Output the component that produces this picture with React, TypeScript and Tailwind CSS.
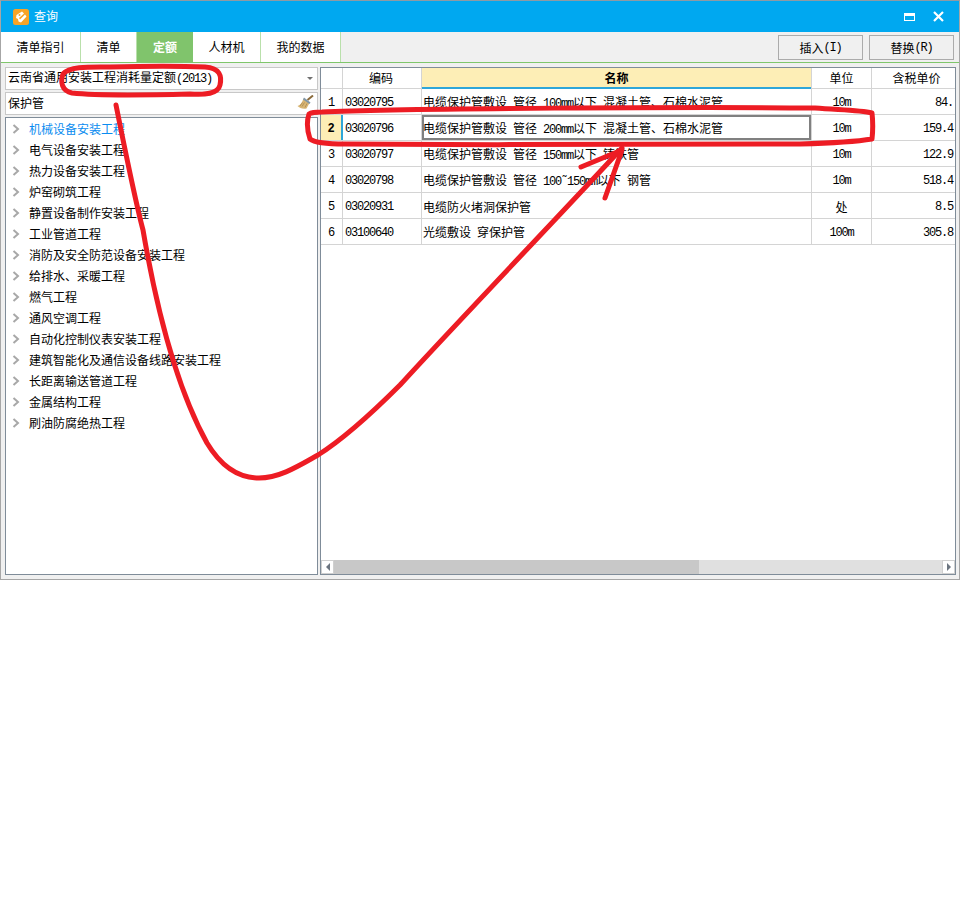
import React from 'react';

const tabs = [
  { name: '清单指引', width: 'w-[80px]' },
  { name: '清单', width: 'w-[56px]' },
  { name: '定额', width: 'w-[56px]', active: true },
  { name: '人材机', width: 'w-[68px]' },
  { name: '我的数据', width: 'w-[80px]' },
];

const treeItems = [
  '机械设备安装工程',
  '电气设备安装工程',
  '热力设备安装工程',
  '炉窑砌筑工程',
  '静置设备制作安装工程',
  '工业管道工程',
  '消防及安全防范设备安装工程',
  '给排水、采暖工程',
  '燃气工程',
  '通风空调工程',
  '自动化控制仪表安装工程',
  '建筑智能化及通信设备线路安装工程',
  '长距离输送管道工程',
  '金属结构工程',
  '刷油防腐绝热工程',
];

const rows = [
  { no: 1, code: '03020795', name: '电缆保护管敷设 管径 100mm以下 混凝土管、石棉水泥管', unit: '10m', price: '84.' },
  { no: 2, code: '03020796', name: '电缆保护管敷设 管径 200mm以下 混凝土管、石棉水泥管', unit: '10m', price: '159.4' },
  { no: 3, code: '03020797', name: '电缆保护管敷设 管径 150mm以下 铸铁管', unit: '10m', price: '122.9' },
  { no: 4, code: '03020798', name: '电缆保护管敷设 管径 100˜150mm以下 钢管', unit: '10m', price: '518.4' },
  { no: 5, code: '03020931', name: '电缆防火堵洞保护管', unit: '处', price: '8.5' },
  { no: 6, code: '03100640', name: '光缆敷设 穿保护管', unit: '100m', price: '305.8' },
];

// latin bits are narrower than the CJK ones, like the bitmap font in the shot
const latin = "font-['Liberation_Mono',monospace] text-[12px] tracking-[-1.2px] whitespace-pre";

const Mixed: React.FC<{ text: string }> = ({ text }) => (
  <>
    {text.split(/([\x20-\x7e˜]+)/).map((part, i) =>
      i % 2 === 1 ? (
        <span key={i} className={latin}>
          {part}
        </span>
      ) : (
        <span key={i}>{part}</span>
      ),
    )}
  </>
);

const Logo = () => (
  <svg width="16" height="16" viewBox="0 0 16 16">
    <rect width="16" height="16" rx="2.5" fill="#f7a428" />
    <path d="M3.5 6 L9 2.5 L11 4.5 L6 9 L7 10.5 L12 5.5 L13.5 7.5 L8 13.5 L5.5 12.5 L5 10 L3 9 Z" fill="#fff" />
    <circle cx="6.5" cy="6" r="1" fill="#f7a428" />
  </svg>
);

const Broom = () => (
  <svg width="17" height="15" viewBox="0 0 17 15">
    <path d="M10.5 5 L16 0.5" stroke="#8a6a3a" strokeWidth="2" />
    <path d="M6.5 3.5 L12.5 8 L9.5 13.5 C6 14.5 2.5 13 0.5 11 C3 10.5 5 8 6.5 3.5 Z" fill="#d8b573" />
    <path d="M5 11.5 L7.5 7.5 M8 12.5 L10 8.5 M3 11 L5.5 7.5" stroke="#a98850" strokeWidth="0.8" />
    <path d="M7 2.5 L13.5 7.5 L12.5 9 L6 4.5 Z" fill="#7f96a8" />
  </svg>
);

const Chevron = () => (
  <svg width="8" height="10" viewBox="0 0 8 10" className="shrink-0">
    <path d="M1.5 1 L6 5 L1.5 9" stroke="#a8a8a8" strokeWidth="2" fill="none" />
  </svg>
);

const Annotations = () => (
  <svg width="960" height="580" viewBox="0 0 960 580" className="absolute left-0 top-0 pointer-events-none">
    <g stroke="#ed1c24" fill="none" strokeLinecap="round" strokeLinejoin="round">
      <path
        strokeWidth="5"
        d="M63 74 C70 66 90 67 110 67 C150 66 180 66 205 67 C220 68 222 76 220 85 C218 94 205 95 190 94 C150 95 100 96 72 93 C62 91 60 82 63 74 Z"
      />
      <path
        strokeWidth="5"
        d="M322 112 C400 108 700 107 815 108 C840 110 860 110 872 113 C873 122 873 130 872 139 C860 141 835 143 800 144 C700 145 500 145 345 144 C330 144 315 143 310 139 C307 130 307 120 309 114 C312 112 316 112 322 112 Z"
      />
      <path
        strokeWidth="5"
        d="M116 105 C125 150 135 200 143 230 C155 300 175 385 207 443 C222 468 240 478 259 478 C280 478 300 465 318 455 C345 438 375 410 400 385 C450 330 560 215 622 148"
      />
      <path strokeWidth="5" d="M581 167 L622 150 L605 198" />
    </g>
  </svg>
);

export default function App() {
  return (
    <div className="relative w-[960px] h-[906px] bg-white overflow-hidden font-['Noto_Sans_CJK_SC',sans-serif] text-[12px] text-black">
      <div className="w-[960px] h-[580px] flex flex-col border border-[#a6a6a6] border-t-[#8f9aa3] bg-[#f0f0f0]">
        {/* title bar */}
        <div className="h-[31px] shrink-0 bg-[#00a8f0] flex items-center pl-[12px] pr-[15px] text-white">
          <Logo />
          <span className="ml-[5px] pb-[2px]">查询</span>
          <div className="ml-auto flex items-center gap-[18px]">
            <div className="w-[11px] h-[8px] border border-white border-t-[3px]" />
            <svg width="11" height="11" viewBox="0 0 11 11">
              <path d="M1 1 L10 10 M10 1 L1 10" stroke="#fff" strokeWidth="2.2" />
            </svg>
          </div>
        </div>

        {/* tabs */}
        <div className="h-[31px] shrink-0 flex border-b border-[#7fc66b] relative">
          {tabs.map((t) => (
            <div
              key={t.name}
              className={
                t.active
                  ? `${t.width} bg-[#80c46c] text-white font-bold flex items-center justify-center`
                  : `${t.width} bg-white border-r border-[#b9e0ab] flex items-center justify-center`
              }
            >
              {t.name}
            </div>
          ))}
          <div className="ml-auto flex gap-[6px] pr-[5px] pt-[3px]">
            <button className="w-[85px] h-[25px] border border-[#ababab] flex items-center justify-center">
              <Mixed text="插入(I)" />
            </button>
            <button className="w-[85px] h-[25px] border border-[#ababab] flex items-center justify-center">
              <Mixed text="替换(R)" />
            </button>
          </div>
        </div>

        {/* body */}
        <div className="flex-1 flex pt-[4px] pl-[4px] pr-[3px] pb-[4px] gap-[2px] min-h-0">
          {/* left panel */}
          <div className="w-[313px] shrink-0 flex flex-col gap-[2px]">
            <div className="h-[23px] shrink-0 bg-white border border-[#c8c8c8] flex items-center pl-[2px] pr-[4px]">
              <span className="pb-[2px]">
                <Mixed text="云南省通用安装工程消耗量定额(2013)" />
              </span>
              <div className="ml-auto w-0 h-0 border-x-[3px] border-x-transparent border-t-[3px] border-t-[#707070]" />
            </div>
            <div className="h-[23px] shrink-0 bg-white border border-[#c8c8c8] flex items-center pl-[2px] pr-[3px]">
              <span className="pb-[2px]">保护管</span>
              <div className="ml-auto -mt-[2px]">
                <Broom />
              </div>
            </div>
            <div className="flex-1 bg-white border border-[#7f8c99] min-h-0">
              {treeItems.map((item, i) => (
                <div key={item} className="h-[21px] flex items-center pl-[6px] gap-[9px]">
                  <Chevron />
                  <span className={i === 0 ? 'text-[#0a8cf0]' : ''}>{item}</span>
                </div>
              ))}
            </div>
          </div>

          {/* right grid */}
          <div className="flex-1 bg-white border border-[#7f8c99] flex flex-col min-w-0 min-h-0">
            <div className="h-[21px] shrink-0 flex border-b border-[#d4d4d4] text-center leading-[20px]">
              <div className="w-[22px] shrink-0 border-r border-[#d4d4d4]" />
              <div className="w-[79px] shrink-0 border-r border-[#d4d4d4] pr-[2px]">编码</div>
              <div className="w-[389px] shrink-0 bg-[#fdeeb6] border-b-2 border-[#2ea6d9] font-bold h-[21px]">名称</div>
              <div className="w-[61px] shrink-0 border-x border-[#d4d4d4]">单位</div>
              <div className="flex-1 pl-[6px]">含税单价</div>
            </div>
            {rows.map((r) => {
              const active = r.no === 2;
              return (
                <div key={r.no} className="h-[26px] shrink-0 flex border-b border-[#d4d4d4] items-stretch">
                  <div
                    className={
                      active
                        ? "w-[22px] shrink-0 pt-[2px] bg-[#fdeeb6] border-r-2 border-[#2ea6d9] font-bold flex items-center justify-center font-['Liberation_Mono',monospace] text-[12px]"
                        : "w-[22px] shrink-0 pt-[2px] border-r border-[#d4d4d4] flex items-center justify-center font-['Liberation_Mono',monospace] text-[12px]"
                    }
                  >
                    {r.no}
                  </div>
                  <div className="w-[79px] shrink-0 pt-[2px] border-r border-[#d4d4d4] flex items-center pl-[2px]">
                    <span className={latin}>{r.code}</span>
                  </div>
                  <div
                    className={
                      active
                        ? 'w-[389px] shrink-0 pt-[2px] border-2 border-[#808080] flex items-center'
                        : 'w-[389px] shrink-0 pt-[2px] flex items-center pl-[1px]'
                    }
                  >
                    <span className={active ? '-ml-[1px]' : ''}>
                      <Mixed text={r.name} />
                    </span>
                  </div>
                  <div className="w-[61px] shrink-0 pt-[2px] border-x border-[#d4d4d4] flex items-center justify-center">
                    <Mixed text={r.unit} />
                  </div>
                  <div className="flex-1 pt-[2px] flex items-center justify-end pr-[2px]">
                    <Mixed text={r.price} />
                  </div>
                </div>
              );
            })}

            {/* horizontal scrollbar */}
            <div className="mt-auto h-[14px] shrink-0 flex bg-[#e0e0e0]">
              <div className="w-[13px] bg-white border border-[#d0d0d0] flex items-center justify-center">
                <div className="w-0 h-0 border-y-[4px] border-y-transparent border-r-[4px] border-r-[#6c7580]" />
              </div>
              <div className="w-[365px] bg-[#c8c8c8]" />
              <div className="ml-auto w-[13px] bg-white border border-[#d0d0d0] flex items-center justify-center">
                <div className="w-0 h-0 border-y-[4px] border-y-transparent border-l-[4px] border-l-[#6c7580]" />
              </div>
            </div>
          </div>
        </div>
      </div>
      <Annotations />
    </div>
  );
}
